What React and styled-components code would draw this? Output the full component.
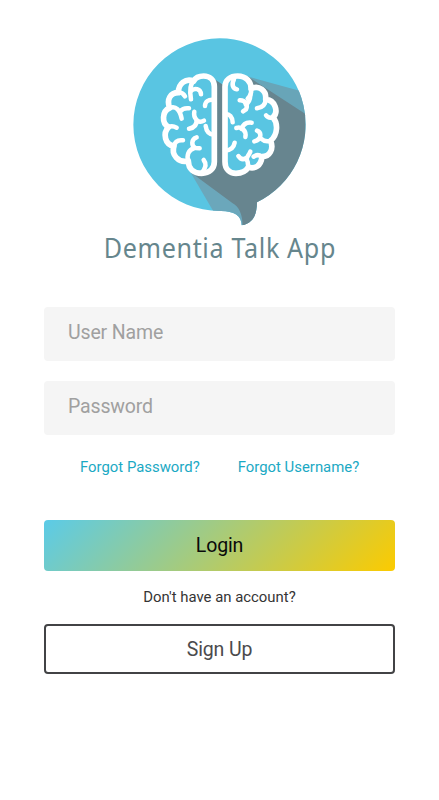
import React from 'react';
import styled, { createGlobalStyle } from 'styled-components';

const GlobalStyle = createGlobalStyle`
  *, *::before, *::after { box-sizing: border-box; }
  body { margin: 0; background: #fff; font-family: Roboto, sans-serif; }
`;

const Screen = styled.main`
  width: 439px;
  height: 800px;
  padding: 30px 44px 0;
  display: flex;
  flex-direction: column;
  background: #fff;
  overflow: hidden;
`;

const Brand = styled.header`
  display: flex;
  flex-direction: column;
  align-items: center;
  height: 277px;
`;

const Logo = styled.svg`
  display: block;
  width: 190px;
  height: 200px;
  flex: none;
`;

const Title = styled.h1`
  margin: 0;
  font: 400 27px/36px 'Noto Sans', sans-serif;
  letter-spacing: 0.7px;
  color: #66868d;
  white-space: nowrap;
  transform: scaleX(0.93);
`;

const Form = styled.form`
  display: flex;
  flex-direction: column;
`;

const Field = styled.input`
  width: 351px;
  height: 54px;
  margin: 0 0 20px;
  padding: 0 24px 3px;
  border: 0;
  border-radius: 4px;
  background: #f5f5f5;
  font: 400 19.5px Roboto, sans-serif;
  letter-spacing: -0.15px;
  color: #333;
  &::placeholder { color: #a0a0a0; opacity: 1; }
`;

const LinkRow = styled.nav`
  display: flex;
  gap: 38px;
  padding-left: 36px;
  height: 65px;
`;

const TextLink = styled.a`
  font-size: 14.9px;
  line-height: 24px;
  color: #1ba9c4;
  text-decoration: none;
  white-space: nowrap;
`;

const Button = styled.button`
  width: 351px;
  height: ${(p) => (p.$outlined ? 50 : 51)}px;
  padding: 0;
  border: ${(p) => (p.$outlined ? '2px solid #424345' : '0')};
  border-radius: 4px;
  background: ${(p) => (p.$outlined ? '#fff' : 'linear-gradient(135deg, #5bcbe8, #fccb00)')};
  font: 400 19.5px Roboto, sans-serif;
  letter-spacing: -0.12px;
  color: ${(p) => (p.$outlined ? '#4b4b4d' : '#0a0a0a')};
`;

const Prompt = styled.p`
  margin: 0;
  height: 53px;
  font-size: 14.9px;
  line-height: 52px;
  text-align: center;
  color: #353535;
`;

const BUBBLE =
  'M284 25 A259 259 0 0 1 396 517 C396 555 383 580 350 586 C350 556 325 542 284 543 A259 259 0 0 1 284 25Z';
const LEFT_HALF =
  'M268 170 C268 150 254 138 236 138 C222 138 211 144 206 153 C182 144 160 160 160 188 C136 188 124 208 134 234 C111 243 109 281 131 291 C112 310 120 345 147 348 C138 374 160 400 190 393 C190 418 208 430 230 430 C254 430 268 415 268 395Z';
const RIGHT_HALF =
  'M300 170 C300 150 316 138 338 138 C363 138 379 155 378 176 C402 164 425 182 422 208 C450 210 462 245 444 262 C460 280 458 315 437 332 C447 358 434 380 411 380 C408 408 390 418 370 412 C362 425 348 430 333 430 C314 430 300 417 300 395Z';
const LEFT_FOLDS = [
  'M206 153 C195 163 194 185 198 208',
  'M198 183 C208 172 227 176 228 193',
  'M160 187 Q174 188 180 199',
  'M134 234 C153 226 165 241 170 266',
  'M192 235 Q174 233 166 244',
  'M131 291 Q142 286 155 293',
  'M147 348 Q151 328 174 331',
  'M208 245 Q205 260 215 270 Q216 292 192 296',
  'M215 271 Q226 279 237 272',
  'M268 210 C250 207 240 215 240 228',
  'M242 288 C244 304 254 314 268 315',
  'M215 322 C198 327 198 349 212 354 L224 355',
  'M208 354 C190 360 184 376 190 393',
  'M236 390 C248 405 239 419 229 429',
];
const RIGHT_FOLDS = [
  'M327 148 C319 164 323 175 336 178',
  'M378 176 Q381 194 368 206',
  'M344 211 C361 210 370 226 363 238 L354 244',
  'M362 223 Q375 217 376 196',
  'M422 208 Q421 231 396 235',
  'M444 262 Q430 266 423 256',
  'M300 252 C314 251 322 261 323 277',
  'M380 278 C363 276 354 283 350 297',
  'M334 294 C350 289 365 302 361 321',
  'M396 302 C410 307 411 328 388 334',
  'M408 326 Q421 338 437 332',
  'M300 362 Q325 361 329 338',
  'M340 378 Q350 393 364 384',
  'M376 365 C369 381 361 382 368 396 L370 412',
  'M386 380 Q398 371 411 380',
];

function BrainLogo() {
  return (
    <Logo viewBox="0 0 570 600" aria-label="Dementia Talk App logo">
      <defs>
        <clipPath id="bubble"><path d={BUBBLE} /></clipPath>
      </defs>
      <path d={BUBBLE} fill="#59c5e2" />
      <g clipPath="url(#bubble)">
        <path d="M360 137 L515 180 L560 190 V270 Z" fill="#68a5b8" />
        <path d="M196 426 L265 544 L350 590 L400 560 L340 430Z" fill="#6ba7bb" />
        <path d="M262 143 L305 172 L365 137 L538 250 L570 280 V600 H352 C356 560 344 530 322 519 L204 432 L262 400Z" fill="#67858f" />
      </g>
      <g fill="#59c5e2" stroke="#fff" strokeWidth="17" strokeLinecap="round" strokeLinejoin="round">
        <path d={LEFT_HALF} />
        <path d={RIGHT_HALF} />
      </g>
      <g fill="none" stroke="#fff" strokeWidth="13.5" strokeLinecap="round" strokeLinejoin="round">
        {LEFT_FOLDS.map((d) => <path key={d} d={d} />)}
        {RIGHT_FOLDS.map((d) => <path key={d} d={d} />)}
      </g>
    </Logo>
  );
}

export default function App() {
  return (
    <>
      <GlobalStyle />
      <Screen>
        <Brand>
          <BrainLogo />
          <Title>Dementia Talk App</Title>
        </Brand>
        <Form onSubmit={(e) => e.preventDefault()}>
          <Field placeholder="User Name" />
          <Field type="password" placeholder="Password" />
          <LinkRow>
            <TextLink>Forgot Password?</TextLink>
            <TextLink>Forgot Username?</TextLink>
          </LinkRow>
          <Button type="submit">Login</Button>
          <Prompt>Don't have an account?</Prompt>
          <Button type="button" $outlined>Sign Up</Button>
        </Form>
      </Screen>
    </>
  );
}
